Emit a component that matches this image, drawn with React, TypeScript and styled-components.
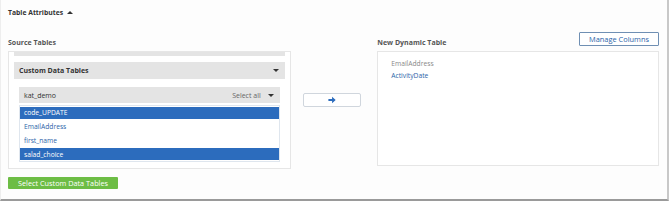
import React from "react";
import styled, { createGlobalStyle } from "styled-components";

const GlobalStyle = createGlobalStyle`
  html, body {
    margin: 0;
    padding: 0;
    background: #ffffff;
  }
  body {
    font-family: "Open Sans", "Liberation Sans", sans-serif;
    font-size: 7px;
    color: #444;
  }
`;

const Card = styled.div`
  box-sizing: border-box;
  width: 669px;
  height: 201px;
  background: #fdfdfd;
  border-left: 1px solid #eeeeee;
  border-right: 2px solid #c8c8c8;
  border-bottom: 2px solid #9a9a9a;
  padding: 7px 8px 0 7px;
`;

const Heading = styled.div`
  display: flex;
  align-items: center;
  gap: 4px;
  height: 10px;
  font-weight: 700;
  font-size: 6.8px;
  color: #333;
`;

const Caret = styled.span<{ $dir: "up" | "down" }>`
  display: inline-block;
  width: 0;
  height: 0;
  border-left: 3px solid transparent;
  border-right: 3px solid transparent;
  ${({ $dir }) =>
    $dir === "up"
      ? "border-bottom: 3px solid #333;"
      : "border-top: 3px solid #333;"}
`;

const Columns = styled.div`
  display: flex;
  margin-top: 11px;
`;

const Column = styled.div<{ $width: number }>`
  width: ${({ $width }) => $width}px;
  display: flex;
  flex-direction: column;
`;

const LabelRow = styled.div`
  display: flex;
  justify-content: space-between;
  align-items: flex-end;
  height: 23px;
`;

const Label = styled.div`
  font-weight: 700;
  font-size: 7px;
  color: #555;
  padding-bottom: 4px;
`;

const Panel = styled.div<{ $height: number; $pad: string }>`
  box-sizing: border-box;
  height: ${({ $height }) => $height}px;
  background: #ffffff;
  border: 1px solid #e6e6e6;
  padding: ${({ $pad }) => $pad};
  overflow: hidden;
`;

const CutBar = styled.div`
  height: 4px;
  margin: 0 5px;
  background: #e4e4e4;
`;

const GroupHeader = styled.div`
  display: flex;
  justify-content: space-between;
  align-items: center;
  height: 17px;
  margin: 6px 5px 0 5px;
  padding: 0 6px 0 5px;
  background: #e4e4e4;
  font-weight: 700;
  font-size: 7px;
  color: #333;
`;

const SubHeader = styled.div`
  display: flex;
  justify-content: space-between;
  align-items: center;
  height: 16px;
  margin: 8px 10px 0 10px;
  padding: 0 6px 0 5px;
  background: #e4e4e4;
  font-size: 7px;
  color: #333;
`;

const SubRight = styled.div`
  display: flex;
  align-items: center;
  gap: 7px;
  color: #666;
`;

const List = styled.div`
  margin: 2px 10px 0 10px;
  height: 57px;
  box-sizing: border-box;
  border: 1px solid #dfe6ee;
  display: flex;
  flex-direction: column;
  gap: 2px;
  padding: 1px 0;
`;

const Item = styled.div<{ $selected?: boolean; $muted?: boolean }>`
  height: 12px;
  display: flex;
  align-items: center;
  padding: 0 4px;
  font-size: 6.7px;
  background: ${({ $selected }) => ($selected ? "#2c6cbd" : "transparent")};
  color: ${({ $selected, $muted }) =>
    $selected ? "#ffffff" : $muted ? "#888" : "#2b64a8"};
`;

const PlainList = styled.div`
  display: flex;
  flex-direction: column;
  gap: 0;
`;

const Middle = styled.div`
  width: 87px;
  display: flex;
  justify-content: center;
  padding-top: 65px;
`;

const ArrowButton = styled.button`
  box-sizing: border-box;
  width: 58px;
  height: 14px;
  margin-right: 4px;
  background: #ffffff;
  border: 1px solid #d0d6dd;
  border-radius: 2px;
  display: flex;
  align-items: center;
  justify-content: center;
  padding: 0;
`;

const OutlineButton = styled.button`
  box-sizing: border-box;
  height: 14px;
  width: 80px;
  margin-bottom: 5px;
  background: #ffffff;
  border: 1px solid #6f8fb3;
  border-radius: 1px;
  font-family: "Open Sans", "Liberation Sans", sans-serif;
  font-size: 7.4px;
  color: #2b64a8;
  padding: 0;
`;

const GreenButton = styled.button`
  box-sizing: border-box;
  margin-top: 8px;
  width: 110px;
  height: 12px;
  background: #6dbd45;
  border: none;
  border-radius: 1px;
  color: #ffffff;
  font-family: "Open Sans", "Liberation Sans", sans-serif;
  font-size: 7.3px;
  padding: 0;
`;

const Arrow = () => (
  <svg width="8" height="8" viewBox="0 0 10 10">
    <path d="M0.5 3.6h4.6V0.8L9.6 5 5.1 9.2V6.4H0.5z" fill="#2c6cbd" />
  </svg>
);

export default function App() {
  return (
    <>
      <GlobalStyle />
      <Card>
        <Heading>
          Table Attributes <Caret $dir="up" />
        </Heading>
        <Columns>
          <Column $width={284}>
            <LabelRow>
              <Label>Source Tables</Label>
            </LabelRow>
            <Panel $height={118} $pad="0">
              <CutBar />
              <GroupHeader>
                Custom Data Tables <Caret $dir="down" />
              </GroupHeader>
              <SubHeader>
                kat_demo
                <SubRight>
                  Select all <Caret $dir="down" />
                </SubRight>
              </SubHeader>
              <List>
                <Item $selected>code_UPDATE</Item>
                <Item>EmailAddress</Item>
                <Item>first_name</Item>
                <Item $selected>salad_choice</Item>
              </List>
            </Panel>
            <div>
              <GreenButton>Select Custom Data Tables</GreenButton>
            </div>
          </Column>
          <Middle>
            <ArrowButton>
              <Arrow />
            </ArrowButton>
          </Middle>
          <Column $width={283}>
            <LabelRow>
              <Label>New Dynamic Table</Label>
              <OutlineButton>Manage Columns</OutlineButton>
            </LabelRow>
            <Panel $height={115} $pad="5px 9px">
              <PlainList>
                <Item $muted>EmailAddress</Item>
                <Item>ActivityDate</Item>
              </PlainList>
            </Panel>
          </Column>
        </Columns>
      </Card>
    </>
  );
}
